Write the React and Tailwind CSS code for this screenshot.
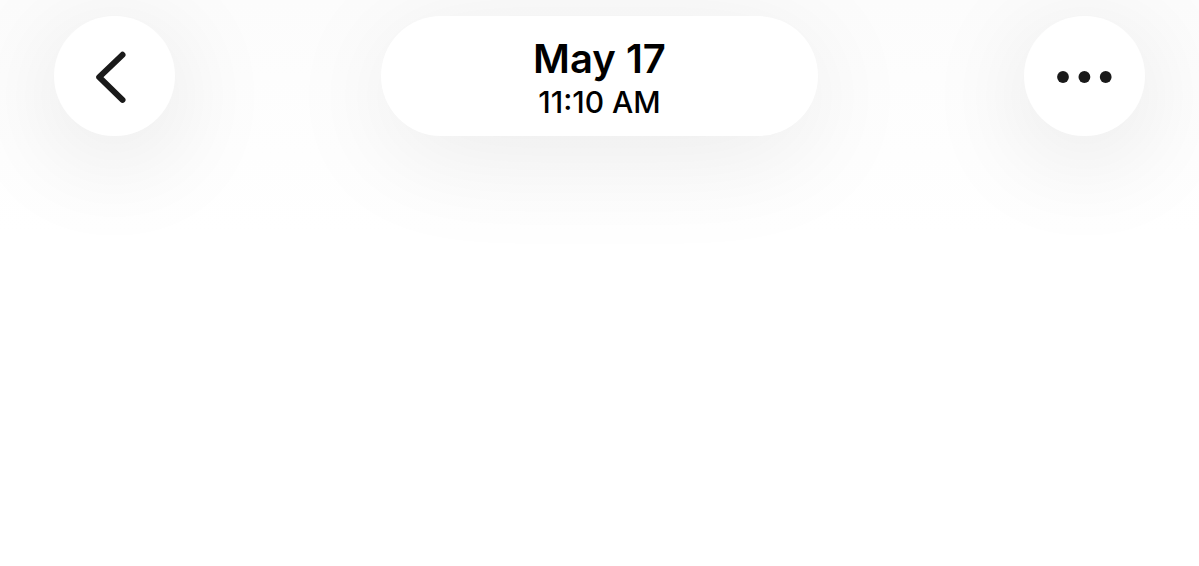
const BackIcon = () => (
  <svg viewBox="0 0 121 120" className="w-full h-full" fill="none" aria-hidden="true">
    <path
      d="M68.5 38.8 L45.2 61.2 L68.5 83.8"
      stroke="#1a1a1a"
      strokeWidth="6"
      strokeLinecap="round"
      strokeLinejoin="round"
    />
  </svg>
)

const MoreIcon = () => (
  <svg viewBox="0 0 121 120" className="w-full h-full" fill="#1a1a1a" aria-hidden="true">
    <circle cx="39" cy="61" r="5.9" />
    <circle cx="60.4" cy="61" r="5.9" />
    <circle cx="81.7" cy="61" r="5.9" />
  </svg>
)

const RoundButton = ({ label, children }) => (
  <button
    type="button"
    aria-label={label}
    className="w-[121px] h-30 shrink-0 rounded-full bg-white shadow-[0_20px_110px_rgba(0,0,0,0.11)]"
  >
    {children}
  </button>
)

const App = () => {
  return (
    <div className="min-h-screen overflow-hidden bg-white font-['Inter',sans-serif] text-black">
      <header className="flex items-start justify-between px-[54px] pt-4 pb-24 bg-linear-to-b from-[#fcfcfc] to-white">
        <RoundButton label="Back">
          <BackIcon />
        </RoundButton>

        <div className="w-[437px] h-30 pt-1.5 rounded-full bg-white flex flex-col items-center justify-center shadow-[0_20px_110px_rgba(0,0,0,0.08)]">
          <h1 className="text-[40px] leading-[46px] font-semibold">May 17</h1>
          <p className="text-[30px] leading-10 font-medium">11:10 AM</p>
        </div>

        <RoundButton label="More options">
          <MoreIcon />
        </RoundButton>
      </header>
    </div>
  )
}

export default App
